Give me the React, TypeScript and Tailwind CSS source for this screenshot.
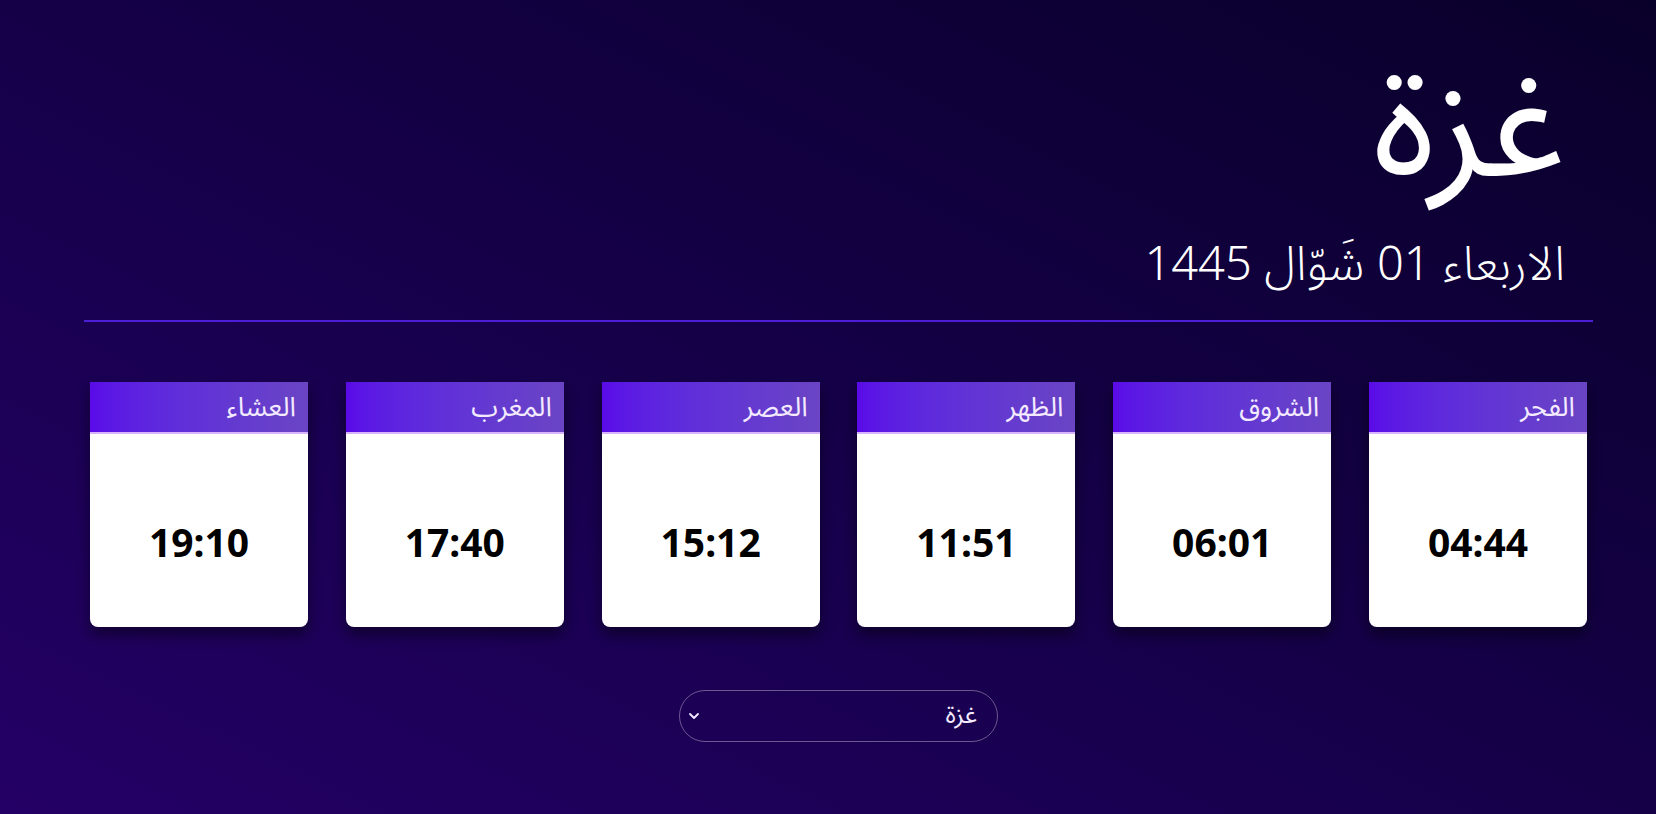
import React from 'react'

const prayers = [
  { name: 'الفجر', time: '04:44' },
  { name: 'الشروق', time: '06:01' },
  { name: 'الظهر', time: '11:51' },
  { name: 'العصر', time: '15:12' },
  { name: 'المغرب', time: '17:40' },
  { name: 'العشاء', time: '19:10' },
]

function PrayerCard({ name, time }: { name: string; time: string }) {
  return (
    <div className="w-[218px] h-[245px] flex flex-col rounded-b-[8px] bg-white shadow-[0_8px_14px_rgba(0,0,0,0.45)]">
      <div className="h-[52px] flex items-center px-[12px] bg-gradient-to-r from-[#5a0ae8] to-[#6a44c4] border-b-2 border-[#d8b4fe]">
        <span className="text-[27px] text-[#f3eaff] leading-none">{name}</span>
      </div>
      <div className="flex-1 flex items-center justify-center pt-[22px]">
        <span
          dir="ltr"
          className="text-[39px] font-bold text-black leading-none"
          style={{ fontFamily: '"Noto Sans", "Open Sans", sans-serif' }}
        >
          {time}
        </span>
      </div>
    </div>
  )
}

export default function App() {
  return (
    <div
      dir="rtl"
      className="w-full h-[814px] overflow-hidden bg-gradient-to-bl from-[#09002a] via-[#150048] to-[#240066] text-white"
      style={{ fontFamily: '"Noto Sans Arabic", "Noto Sans", "DejaVu Sans", sans-serif' }}
    >
      <div className="pl-[84px] pr-[63px] pt-[27px]">
        {/* City and date */}
        <div className="pr-[28px] flex flex-col items-start">
          <h1 className="text-[152px] leading-[200px] font-normal">غزة</h1>
          <p className="text-[47px] font-light leading-[72px] mt-[2px]">الاربعاء 01 شَوّال 1445</p>
        </div>

        <div className="h-[2px] bg-[#4c1fd6] mt-[19px]" />

        {/* Prayer times */}
        <div className="flex justify-between px-[6px] mt-[60px]">
          {prayers.map((p) => (
            <PrayerCard key={p.name} name={p.name} time={p.time} />
          ))}
        </div>

        {/* City select */}
        <div className="flex justify-center mt-[63px]" dir="ltr">
          <div
            dir="rtl"
            className="w-[319px] h-[52px] rounded-full border border-white/35 flex items-center justify-between pr-[20px] pl-[8px]"
          >
            <span className="text-[25px] text-[#f3eaff]">غزة</span>
            <svg width="12" height="8" viewBox="0 0 12 8" fill="none">
              <path d="M2 2l4 4 4-4" stroke="#f3eaff" strokeWidth="1.8" strokeLinecap="round" strokeLinejoin="round" />
            </svg>
          </div>
        </div>
      </div>
    </div>
  )
}
